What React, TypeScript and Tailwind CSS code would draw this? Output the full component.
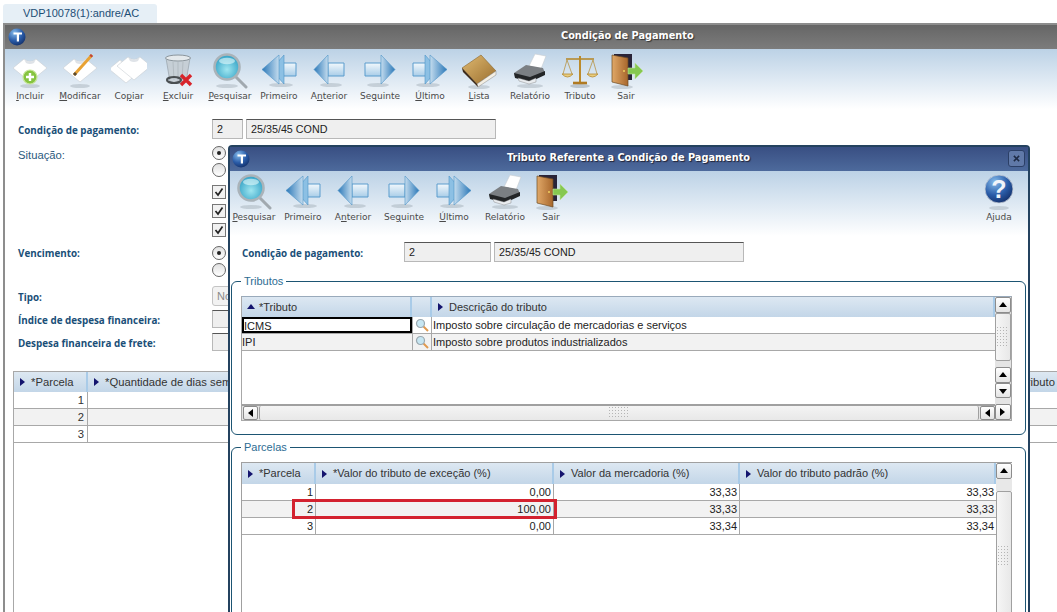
import type { ReactNode } from 'react';

const ui = "font-['Liberation_Sans',Arial,sans-serif]";
const tah = "font-['DejaVu_Sans',Verdana,sans-serif]";
const bold = "font-['Open_Sans',Verdana,sans-serif]";

function Defs() {
  return (
    <svg className="absolute w-0 h-0">
      <defs>
        <linearGradient id="head" x1="0" x2="1" y1="0" y2="0">
          <stop offset="0" stopColor="#2b78b8" />
          <stop offset="1" stopColor="#c4dcee" />
        </linearGradient>
        <linearGradient id="headR" x1="0" x2="1" y1="0" y2="0">
          <stop offset="0" stopColor="#c4dcee" />
          <stop offset="1" stopColor="#2b78b8" />
        </linearGradient>
        <linearGradient id="tail" x1="0" x2="0" y1="0" y2="1">
          <stop offset="0" stopColor="#f2f8fc" />
          <stop offset="1" stopColor="#a9cde8" />
        </linearGradient>
        <radialGradient id="lens" cx="0.5" cy="0.6" r="0.6">
          <stop offset="0" stopColor="#9fe6f0" />
          <stop offset="1" stopColor="#2f9fc4" />
        </radialGradient>
        <radialGradient id="globe" cx="0.35" cy="0.25" r="0.85">
          <stop offset="0" stopColor="#86bcec" />
          <stop offset="0.55" stopColor="#2a5ca8" />
          <stop offset="1" stopColor="#102a62" />
        </radialGradient>
        <linearGradient id="door" x1="0" x2="1" y1="0" y2="0">
          <stop offset="0" stopColor="#e0a868" />
          <stop offset="1" stopColor="#a8672c" />
        </linearGradient>
        <linearGradient id="book" x1="0" x2="1" y1="0" y2="1">
          <stop offset="0" stopColor="#e0ba72" />
          <stop offset="1" stopColor="#9a6e2e" />
        </linearGradient>
      </defs>
    </svg>
  );
}

function Shadow({ cx = 18, cy = 33, rx = 12 }: { cx?: number; cy?: number; rx?: number }) {
  return <ellipse cx={cx} cy={cy} rx={rx} ry={2} fill="#7d8a96" opacity={0.3} />;
}

function Sheet({ dx = 0, dy = 0 }: { dx?: number; dy?: number }) {
  return (
    <g transform={`translate(${dx} ${dy})`}>
      <path d="M1 15 L12 6 Q18 11 24 6 L35 15 L18 29 Z" fill="#fff" stroke="#c9ced4" strokeWidth={0.6} />
      <path d="M12 6 Q18 11 24 6 L22 10 Q18 12 14 10 Z" fill="#dfe3e8" />
    </g>
  );
}

function ArrowLeft() {
  return (
    <g>
      <Shadow cx={20} cy={32} rx={11} />
      <path d="M17 10 H33 V23 H17 Z" fill="url(#tail)" stroke="#5b9ccd" strokeWidth={1} />
      <path d="M3 16.5 L17 2 V31 Z" fill="url(#head)" stroke="#4f93c8" strokeWidth={0.6} />
    </g>
  );
}

function ArrowRight() {
  return (
    <g>
      <Shadow cx={16} cy={32} rx={11} />
      <path d="M3 10 H19 V23 H3 Z" fill="url(#tail)" stroke="#5b9ccd" strokeWidth={1} />
      <path d="M33 16.5 L19 2 V31 Z" fill="url(#headR)" stroke="#4f93c8" strokeWidth={0.6} />
    </g>
  );
}

function ArrowFirst() {
  return (
    <g>
      <Shadow cx={20} cy={32} rx={12} />
      <path d="M22 10 H35 V23 H22 Z" fill="url(#tail)" stroke="#5b9ccd" strokeWidth={1} />
      <path d="M10 16.5 L23 2 V31 Z" fill="#8cc0e4" stroke="#4f93c8" strokeWidth={0.6} />
      <path d="M1 16.5 L18 2 V31 Z" fill="url(#head)" stroke="#4f93c8" strokeWidth={0.6} />
    </g>
  );
}

function ArrowLast() {
  return (
    <g>
      <Shadow cx={16} cy={32} rx={12} />
      <path d="M1 10 H14 V23 H1 Z" fill="url(#tail)" stroke="#5b9ccd" strokeWidth={1} />
      <path d="M26 16.5 L13 2 V31 Z" fill="#8cc0e4" stroke="#4f93c8" strokeWidth={0.6} />
      <path d="M35 16.5 L18 2 V31 Z" fill="url(#headR)" stroke="#4f93c8" strokeWidth={0.6} />
    </g>
  );
}

function Magnifier() {
  return (
    <g>
      <Shadow cx={15} cy={33} rx={11} />
      <path d="M24 24 L34 34" stroke="#a1a9af" strokeWidth={3} strokeLinecap="round" />
      <circle cx={15} cy={14} r={12.5} fill="url(#lens)" stroke="#aab3b9" strokeWidth={2.6} />
      <ellipse cx={15} cy={8} rx={8} ry={3.2} fill="#e4fafc" opacity={0.6} />
    </g>
  );
}

function Icon({ name }: { name: string }) {
  let g: ReactNode = null;
  if (name === 'add')
    g = (
      <g>
        <Shadow cy={33} rx={10} />
        <Sheet />
        <circle cx={18} cy={24} r={7} fill="#86c440" stroke="#c9e69c" strokeWidth={1.2} />
        <path d="M18 20 V28 M14 24 H22" stroke="#fff" strokeWidth={2.4} />
      </g>
    );
  if (name === 'edit')
    g = (
      <g>
        <Shadow cy={33} rx={10} />
        <Sheet />
        <path d="M12 22 L30 2" stroke="#e8a233" strokeWidth={3} />
        <path d="M28.5 3.5 L30 2" stroke="#c0453a" strokeWidth={3} />
        <path d="M12 22 L14 20" stroke="#5a4a32" strokeWidth={3} />
      </g>
    );
  if (name === 'copy')
    g = (
      <g>
        <Sheet dx={-3} dy={1} />
        <Sheet dx={5} dy={-2} />
      </g>
    );
  if (name === 'trash')
    g = (
      <g>
        <path d="M6 5 L10 29 Q18 32 26 29 L30 5 Z" fill="#c6ced4" stroke="#98a2a9" strokeWidth={0.8} opacity={0.9} />
        <ellipse cx={18} cy={5} rx={12.5} ry={3} fill="#e4e9ec" stroke="#8b959c" strokeWidth={1} />
        <path d="M13 9 L14 27 M18 9 V28 M23 9 L22 27" stroke="#aab3b9" strokeWidth={0.7} />
        <ellipse cx={14} cy={27} rx={7} ry={3} fill="none" stroke="#4a4f52" strokeWidth={2.2} />
        <path d="M21 22 L31 32 M31 22 L21 32" stroke="#d8242a" strokeWidth={3.4} />
      </g>
    );
  if (name === 'search') g = <Magnifier />;
  if (name === 'first') g = <ArrowFirst />;
  if (name === 'prev') g = <ArrowLeft />;
  if (name === 'next') g = <ArrowRight />;
  if (name === 'last') g = <ArrowLast />;
  if (name === 'book')
    g = (
      <g>
        <Shadow cy={34} rx={11} />
        <path d="M1 15 L20 2 L35 18 L16 31 Z" fill="url(#book)" stroke="#8a6428" strokeWidth={0.6} />
        <path d="M16 31 L35 18 L35 22 L17 34 Z" fill="#f4efe4" stroke="#888" strokeWidth={0.5} />
        <path d="M1 15 L16 31 L17 34 L2 19 Z" fill="#3c2a1a" />
      </g>
    );
  if (name === 'print')
    g = (
      <g>
        <Shadow cy={33} rx={13} />
        <path d="M17 13 L23 1 L34 3 L29 16 Z" fill="#fff" stroke="#c8ccd0" strokeWidth={0.6} />
        <path d="M2 20 L14 12 L31 15 L33 20 L18 27 L3 24 Z" fill="#7b7f83" />
        <path d="M2 20 L18 24 L33 18 L33 22 L18 29 L3 25 Z" fill="#232527" />
        <path d="M6 25 L17 28 L24 25 L24 29 L17 31 L7 28 Z" fill="#e9ecef" stroke="#777" strokeWidth={0.4} />
      </g>
    );
  if (name === 'scale')
    g = (
      <g stroke="#b5892e" fill="none">
        <ellipse cx={18} cy={33} rx={10} ry={2} fill="#7d8a96" stroke="none" opacity={0.4} />
        <path d="M18 3 V29" strokeWidth={2} stroke="#bb8a2c" />
        <path d="M11 30 H25" strokeWidth={2.6} stroke="#b07a22" />
        <path d="M4 6 H32" strokeWidth={1.6} />
        <path d="M5 7 L1 21 M5 7 L10 21 M31 7 L26 21 M31 7 L35 21" strokeWidth={0.7} />
        <path d="M0 21 Q5.5 27 11 21 Z" fill="#e9cd7e" strokeWidth={0.8} />
        <path d="M25 21 Q30.5 27 36 21 Z" fill="#e9cd7e" strokeWidth={0.8} />
      </g>
    );
  if (name === 'door')
    g = (
      <g>
        <Shadow cx={14} cy={34} rx={11} />
        <path d="M6 1 H24 V27 H6 Z" fill="#2a2438" />
        <path d="M4 2 L20 5 V33 L4 29 Z" fill="url(#door)" stroke="#6b4a24" strokeWidth={0.7} />
        <circle cx={16} cy={18} r={1} fill="#f0d060" />
        <path d="M20 15 H27 V10 L35 18 L27 26 V21 H20 Z" fill="#86c850" stroke="#bfe39a" strokeWidth={0.6} />
      </g>
    );
  if (name === 'help')
    g = (
      <g>
        <Shadow cy={34} rx={10} />
        <circle cx={18} cy={15} r={14} fill="url(#globe)" stroke="#c5ccd6" strokeWidth={0.8} />
        <text x={18} y={24} textAnchor="middle" fontSize={25} fontWeight={700} fill="#f0f4fa" fontFamily="Liberation Sans">
          ?
        </text>
      </g>
    );
  return (
    <svg viewBox="0 0 36 36" className="w-[36px] h-[36px]">
      {g}
    </svg>
  );
}

function TitleLogo() {
  return (
    <svg viewBox="0 0 18 18" className="w-[18px] h-[18px] shrink-0">
      <circle cx={9} cy={9} r={8.5} fill="url(#globe)" />
      <path d="M5.5 4.5 H14 V6.5 H11 V13.5 H8.8 V6.5 H5.5 Z" fill="#fff" />
    </svg>
  );
}

function ToolItem({ icon, label, className = '' }: { icon: string; label: ReactNode; className?: string }) {
  return (
    <div className={`w-[50px] shrink-0 flex flex-col items-center ${className}`}>
      <Icon name={icon} />
      <div className={`${tah} text-[9px] leading-[12px] mt-[1px] text-[#4a4a4a] whitespace-nowrap`}>{label}</div>
    </div>
  );
}

function Tri({ dir = 'right', color = '#14146e' }: { dir?: 'right' | 'up' | 'down' | 'left'; color?: string }) {
  const d = { right: 'M1 0 L6 4 L1 8 Z', left: 'M6 0 L1 4 L6 8 Z', up: 'M0 6 L4 1 L8 6 Z', down: 'M0 2 L8 2 L4 7 Z' }[dir];
  return (
    <svg viewBox="0 0 8 8" className="w-[8px] h-[8px] shrink-0">
      <path d={d} fill={color} />
    </svg>
  );
}

function Grip({ vertical = true }: { vertical?: boolean }) {
  const cols = vertical ? 4 : 7;
  const rows = vertical ? 7 : 4;
  const dots: ReactNode[] = [];
  for (let r = 0; r < rows; r++)
    for (let c = 0; c < cols; c++) dots.push(<rect key={`${r}-${c}`} x={c * 3} y={r * 3} width={1} height={1} fill="#b5b5b5" />);
  return (
    <svg width={cols * 3} height={rows * 3} className="shrink-0">
      {dots}
    </svg>
  );
}

function ScrollBtn({ dir, className = '' }: { dir: 'up' | 'down' | 'left' | 'right'; className?: string }) {
  return (
    <div
      className={`flex items-center justify-center shrink-0 rounded-[2px] border border-[#8c8c8c] bg-gradient-to-b from-white to-[#e4e4e4] ${className}`}
    >
      <Tri dir={dir} color="#000" />
    </div>
  );
}

function HeadCell({ className, sort = 'right', children }: { className: string; sort?: 'right' | 'up'; children: ReactNode }) {
  return (
    <div
      className={`h-full flex items-center gap-[4px] pl-[5px] border-r-2 border-[#a9cbe8] overflow-hidden whitespace-nowrap ${className}`}
    >
      <Tri dir={sort} />
      <span>{children}</span>
    </div>
  );
}

function SmallSearch() {
  return (
    <svg viewBox="0 0 14 14" className="w-[14px] h-[14px]">
      <path d="M8.5 8.5 L13 13" stroke="#e09a50" strokeWidth={2} />
      <circle cx={5.5} cy={5.5} r={4} fill="#c7e6f2" stroke="#9aa7ae" strokeWidth={1.2} />
    </svg>
  );
}

function Radio({ checked = false }: { checked?: boolean }) {
  return (
    <div className="w-[14px] h-[14px] rounded-full border border-[#666] bg-gradient-to-b from-[#e0e0e0] to-white flex items-center justify-center">
      {checked && <div className="w-[4px] h-[4px] rounded-full bg-[#222]" />}
    </div>
  );
}

function Check() {
  return (
    <div className="w-[14px] h-[14px] border border-[#777] bg-[#f1f1f1] flex items-center justify-center">
      <svg viewBox="0 0 10 10" className="w-[10px] h-[10px]">
        <path d="M1.5 5 L4 8 L8.5 1.5" fill="none" stroke="#222" strokeWidth={1.7} />
      </svg>
    </div>
  );
}

function Field({ className, children }: { className: string; children?: ReactNode }) {
  return (
    <div className={`flex items-center pl-[4px] text-[10.75px] text-[#222] bg-[#efefef] border border-[#b8b8b8] border-t-[#555] ${className}`}>
      {children}
    </div>
  );
}

function Label({ strong = false, children }: { strong?: boolean; children: ReactNode }) {
  return strong ? (
    <span className={`${bold} font-bold text-[9.85px] text-[#1a4f78] whitespace-nowrap`}>{children}</span>
  ) : (
    <span className="text-[11.25px] text-[#2b5a7e] whitespace-nowrap">{children}</span>
  );
}

function FormRow({ label, className, children }: { label: string; className: string; children: ReactNode }) {
  return (
    <div className={`flex items-center ${className}`}>
      <div className="w-[194px] shrink-0">
        <Label strong>{label}</Label>
      </div>
      {children}
    </div>
  );
}

function Background() {
  return (
    <div className="ml-[3px] h-[589px] border-l-2 border-t-2 border-[#8d8d8d] flex flex-col">
      <div className="h-[24px] shrink-0 flex items-center pl-[3px] bg-gradient-to-b from-[#666666] to-[#7c7c7c] relative">
        <TitleLogo />
        <div className={`${tah} font-bold text-[9.75px] text-white absolute left-[556px] top-[4px] [text-shadow:1px_1px_1px_#333]`}>
          Condição de Pagamento
        </div>
      </div>
      <div className="h-[60px] shrink-0 pt-[4px] flex bg-gradient-to-b from-[#bcd2e6] to-white">
        <ToolItem icon="add" label={<><u>I</u>ncluir</>} />
        <ToolItem icon="edit" label={<><u>M</u>odificar</>} />
        <ToolItem icon="copy" label={<>Co<u>p</u>iar</>} className="ml-[-1px]" />
        <ToolItem icon="trash" label={<><u>E</u>xcluir</>} className="ml-[-1px]" />
        <ToolItem icon="search" label={<><u>P</u>esquisar</>} className="ml-[2px]" />
        <ToolItem icon="first" label="Primeiro" className="ml-[-1px]" />
        <ToolItem icon="prev" label={<>A<u>n</u>terior</>} />
        <ToolItem icon="next" label={<>Se<u>g</u>uinte</>} className="ml-[1px]" />
        <ToolItem icon="last" label={<><u>Ú</u>ltimo</>} />
        <ToolItem icon="book" label={<><u>L</u>ista</>} className="ml-[-1px]" />
        <ToolItem icon="print" label="Relatório" className="ml-[1px]" />
        <ToolItem icon="scale" label="Tributo" />
        <ToolItem icon="door" label="Sair" className="ml-[-4px]" />
      </div>
      <div className="flex-1 pl-[13px] pt-[10px] flex flex-col min-h-0">
        <FormRow label="Condição de pagamento:" className="h-[20px]">
          <Field className="w-[31px] h-[20px]">2</Field>
          <Field className="w-[250px] h-[20px] ml-[3px]">25/35/45 COND</Field>
        </FormRow>
        <div className="flex mt-[7px] h-[31px]">
          <div className="w-[194px] shrink-0 h-[14px] pt-[4px] flex items-center">
            <Label>Situação:</Label>
          </div>
          <div className="flex flex-col gap-[3px]">
            <Radio checked />
            <Radio />
          </div>
        </div>
        <div className="flex flex-col gap-[5px] ml-[194px] mt-[8px]">
          <Check />
          <Check />
          <Check />
        </div>
        <div className="flex mt-[9px] h-[31px]">
          <div className="w-[194px] shrink-0 h-[14px] flex items-center">
            <Label strong>Vencimento:</Label>
          </div>
          <div className="flex flex-col gap-[3px]">
            <Radio checked />
            <Radio />
          </div>
        </div>
        <FormRow label="Tipo:" className="h-[20px] mt-[9px]">
          <div className="w-[60px] h-[20px] rounded-[3px] border border-[#c4c4c4] bg-[#f2f2f2] pl-[4px] text-[11px] leading-[18px] text-[#8a8a8a]">No</div>
        </FormRow>
        <FormRow label="Índice de despesa financeira:" className="h-[18px] mt-[4px]">
          <Field className="w-[60px] h-[18px]" />
        </FormRow>
        <FormRow label="Despesa financeira de frete:" className="h-[18px] mt-[5px]">
          <Field className="w-[60px] h-[18px]" />
        </FormRow>
        <div className="mt-[20px] ml-[-5px] flex-1 border-l border-t border-[#a8a8a8] flex flex-col text-[11.25px] text-[#333]">
          <div className="h-[20px] shrink-0 flex items-center bg-gradient-to-b from-[#dde8f2] to-[#c3d6e8]">
            <HeadCell className="w-[74px]">*Parcela</HeadCell>
            <HeadCell className="flex-1">*Quantidade de dias sem</HeadCell>
            <div className="pr-[2px]">Valor do tributo</div>
          </div>
          {[1, 2, 3].map((n) => (
            <div key={n} className={`h-[17px] shrink-0 flex items-center border-b border-[#a8a8a8] ${n === 2 ? 'bg-[#f2f2f2]' : ''}`}>
              <div className="w-[74px] h-full text-right pr-[3px] border-r border-[#a8a8a8] leading-[17px]">{n}</div>
            </div>
          ))}
        </div>
      </div>
    </div>
  );
}

function Tributos() {
  const rows = [
    ['ICMS', 'Imposto sobre circulação de mercadorias e serviços'],
    ['IPI', 'Imposto sobre produtos industrializados'],
  ];
  return (
    <fieldset className="ml-[1px] mr-[2px] h-[161px] rounded-[6px] border border-[#1d5573] px-[9px] pt-[8px]">
      <legend className="px-[3px] h-[14px] leading-[14px] text-[11px] text-[#2d6c93]">Tributos</legend>
      <div className="h-[125px] w-[771px] border border-[#a8a8a8] border-t-[#9ab] flex text-[11px] text-[#333]">
        <div className="w-[754px] flex flex-col">
          <div className="h-[20px] shrink-0 flex items-center bg-gradient-to-b from-[#dde8f2] to-[#c3d6e8]">
            <HeadCell className="w-[170px]" sort="up">*Tributo</HeadCell>
            <div className="w-[20px] h-full border-r-2 border-[#a9cbe8]" />
            <HeadCell className="flex-1">Descrição do tributo</HeadCell>
          </div>
          {rows.map(([code, text], i) => (
            <div key={code} className={`h-[17px] shrink-0 flex items-center border-b border-[#a8a8a8] text-[#222] ${i === 1 ? 'bg-[#f2f2f2]' : ''}`}>
              <div className={`w-[170px] h-full leading-[15px] ${i === 0 ? 'border-2 border-black bg-white' : 'pt-[1px]'}`}>{code}</div>
              <div className="w-[20px] h-full flex items-center justify-center border-x border-[#a8a8a8]">
                <SmallSearch />
              </div>
              <div className="pl-[1px]">{text}</div>
            </div>
          ))}
          <div className="flex-1" />
          <div className="h-[16px] shrink-0 flex bg-[#e4e4e4] border-t-2 border-[#a0a0a0]">
            <ScrollBtn dir="left" className="w-[15px] ml-[1px]" />
            <div className="flex-1 mx-[1px] flex items-center justify-center rounded-[2px] border-x border-[#a0a0a0] bg-gradient-to-b from-[#f4f4f4] to-[#e8e8e8]">
              <Grip vertical={false} />
            </div>
            <ScrollBtn dir="left" className="w-[15px]" />
          </div>
        </div>
        <div className="w-[16px] flex flex-col bg-[#e4e4e4]">
          <ScrollBtn dir="up" className="h-[16px]" />
          <div className="h-[48px] flex items-center justify-center rounded-[2px] border border-[#a0a0a0] bg-gradient-to-r from-[#f6f6f6] to-[#e8e8e8]">
            <Grip />
          </div>
          <div className="h-[6px]" />
          <ScrollBtn dir="up" className="h-[16px]" />
          <ScrollBtn dir="down" className="h-[15px]" />
          <div className="flex-1" />
          <ScrollBtn dir="right" className="h-[16px]" />
        </div>
      </div>
    </fieldset>
  );
}

function Parcelas() {
  const rows = [
    ['1', '0,00', '33,33', '33,33'],
    ['2', '100,00', '33,33', '33,33'],
    ['3', '0,00', '33,34', '33,34'],
  ];
  const widths = ['w-[74px]', 'w-[238px]', 'w-[186px]', 'w-[256px]'];
  return (
    <fieldset className="ml-[1px] mr-[2px] h-[220px] rounded-[6px] border border-[#1d5573] px-[9px] pt-[8px]">
      <legend className="px-[3px] h-[14px] leading-[14px] text-[11px] text-[#2d6c93]">Parcelas</legend>
      <div className="h-[200px] w-[771px] border-l border-t border-[#a0a0a0] flex text-[11px] text-[#333]">
        <div className="w-[754px] flex flex-col relative">
          <div className="h-[21px] shrink-0 flex items-center bg-gradient-to-b from-[#dde8f2] to-[#c3d6e8]">
            <HeadCell className={widths[0]}>*Parcela</HeadCell>
            <HeadCell className={widths[1]}>*Valor do tributo de exceção (%)</HeadCell>
            <HeadCell className={widths[2]}>Valor da mercadoria (%)</HeadCell>
            <HeadCell className={widths[3]}>Valor do tributo padrão (%)</HeadCell>
          </div>
          {rows.map((r, i) => (
            <div key={r[0]} className={`h-[17px] shrink-0 flex border-b border-[#a8a8a8] text-[#222] ${i === 1 ? 'bg-[#f2f2f2]' : ''}`}>
              {r.map((v, j) => (
                <div key={j} className={`${widths[j]} h-full text-right pr-[2px] leading-[17px] ${j < 3 ? 'border-r border-[#a8a8a8]' : ''}`}>
                  {v}
                </div>
              ))}
            </div>
          ))}
          <div className="absolute left-[50px] top-[36px] w-[265px] h-[20px] border-[3px] border-[#d3222f]" />
        </div>
        <div className="w-[16px] flex flex-col">
          <ScrollBtn dir="up" className="h-[16px]" />
          <div className="h-[12px] bg-[#e8e8e8]" />
          <div className="flex-1 flex items-start pt-[54px] justify-center rounded-[2px] border border-[#a0a0a0] bg-gradient-to-r from-[#f6f6f6] to-[#e8e8e8]">
            <Grip />
          </div>
        </div>
      </div>
    </fieldset>
  );
}

function Dialog() {
  return (
    <div className="absolute left-[228px] top-[145px] w-[802px] h-[500px] bg-white border-2 border-[#24425f] border-b-0 rounded-t-[4px] flex flex-col">
      <div className="h-[24px] shrink-0 flex items-center pl-[2px] bg-gradient-to-b from-[#394f83] to-[#4d6a9c] relative">
        <TitleLogo />
        <div className={`${tah} font-bold text-[9.75px] text-white absolute left-[277px] top-[4px] [text-shadow:1px_1px_1px_#223]`}>
          Tributo Referente a Condição de Pagamento
        </div>
        <div className="absolute right-[3px] top-[3px] w-[17px] h-[17px] rounded-[3px] border border-[#2b3f66] bg-[#6079a8] flex items-center justify-center">
          <svg viewBox="0 0 8 8" className="w-[7px] h-[7px]">
            <path d="M1 1 L7 7 M7 1 L1 7" stroke="#1d2a44" strokeWidth={1.8} />
          </svg>
        </div>
      </div>
      <div className="h-[65px] shrink-0 pt-[3px] flex bg-gradient-to-b from-[#bcd2e6] to-white">
        <ToolItem icon="search" label={<><u>P</u>esquisar</>} className="ml-[-1px]" />
        <ToolItem icon="first" label="Primeiro" className="ml-[-1px]" />
        <ToolItem icon="prev" label={<>A<u>n</u>terior</>} />
        <ToolItem icon="next" label={<>Se<u>g</u>uinte</>} className="ml-[1px]" />
        <ToolItem icon="last" label={<><u>Ú</u>ltimo</>} />
        <ToolItem icon="print" label="Relatório" className="ml-[1px]" />
        <ToolItem icon="door" label="Sair" className="ml-[-4px]" />
        <ToolItem icon="help" label="Ajuda" className="ml-auto mr-[4px]" />
      </div>
      <div className="h-[20px] mt-[6px] shrink-0 flex items-center pl-[12px]">
        <div className="w-[162px] shrink-0">
          <Label strong>Condição de pagamento:</Label>
        </div>
        <Field className="w-[87px] h-[20px]">2</Field>
        <Field className="w-[250px] h-[20px] ml-[3px]">25/35/45 COND</Field>
      </div>
      <div className="mt-[12px] flex flex-col gap-[5px]">
        <Tributos />
        <Parcelas />
      </div>
    </div>
  );
}

export default function App() {
  return (
    <div className={`${ui} relative w-[1057px] h-[612px] overflow-hidden bg-white`}>
      <Defs />
      <div className="flex h-[23px] pl-[3px] items-end">
        <div className="w-[154px] h-[19px] rounded-t-[3px] bg-[#e6eff6] pl-[20px] text-[11px] leading-[19px] text-[#1d4e75]">VDP10078(1):andre/AC</div>
      </div>
      <Background />
      <Dialog />
    </div>
  );
}
